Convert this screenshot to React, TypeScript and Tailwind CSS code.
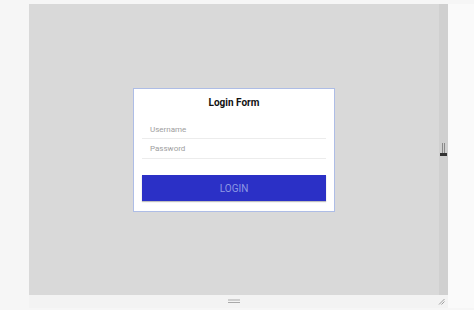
import React from "react";

export default function App() {
  return (
    <div
      className="w-[474px] h-[310px] bg-[#f6f6f6] flex pt-[4px] pl-[29px] overflow-hidden"
      style={{ fontFamily: "Roboto, 'Liberation Sans', sans-serif" }}
    >
      <div className="flex flex-col">
        <div className="flex h-[291px]">
          <div className="w-[410px] h-full bg-[#d9d9d9] flex items-center justify-center">
            <div className="w-[202px] h-[124px] bg-white border border-[#aebde6] flex flex-col px-[8px] pt-[7px] pb-[10px]">
              <div className="h-[14px] leading-[14px] text-center text-[10px] font-bold text-[#111]">
                Login Form
              </div>
              <div className="mt-[9px] h-[20px] border-b border-[#ececec] pl-[8px] pt-[3px] flex items-center text-[8px] text-[#9e9e9e]">
                Username
              </div>
              <div className="h-[20px] border-b border-[#ececec] pl-[8px] pt-[2px] flex items-center text-[8px] text-[#9e9e9e]">
                Password
              </div>
              <div className="mt-[16px] h-[26px] bg-[#2b30c6] flex items-center justify-center pt-[1px] text-[10px] text-[#8e98e4] shadow-[0_1px_1px_rgba(0,0,0,0.25)]">
                LOGIN
              </div>
            </div>
          </div>
          <div className="w-[9px] h-full bg-[#d0d0d0] flex items-center justify-center">
            <svg width="9" height="14" viewBox="0 0 9 14">
              <line x1="3.5" y1="0" x2="3.5" y2="10" stroke="#8a8a8a" strokeWidth="1" />
              <line x1="5.5" y1="0" x2="5.5" y2="10" stroke="#8a8a8a" strokeWidth="1" />
              <rect x="1" y="10" width="7" height="3" fill="#333" />
            </svg>
          </div>
        </div>
        <div className="h-[13px] w-[419px] bg-[#f3f3f3] flex items-center">
          <div className="w-[199px]" />
          <svg width="12" height="5" viewBox="0 0 12 5">
            <line x1="0" y1="1" x2="12" y2="1" stroke="#a9a9a9" strokeWidth="1" />
            <line x1="0" y1="3.5" x2="12" y2="3.5" stroke="#a9a9a9" strokeWidth="1" />
          </svg>
          <div className="flex-1" />
          <svg width="7" height="7" viewBox="0 0 7 7" className="mr-[3px]">
            <line x1="1" y1="6.5" x2="6.5" y2="1" stroke="#888" strokeWidth="0.8" />
            <line x1="3.5" y1="6.5" x2="6.5" y2="3.5" stroke="#888" strokeWidth="0.8" />
          </svg>
        </div>
      </div>
      <div className="flex-1 h-[304px] bg-[#fafafa]" />
    </div>
  );
}
